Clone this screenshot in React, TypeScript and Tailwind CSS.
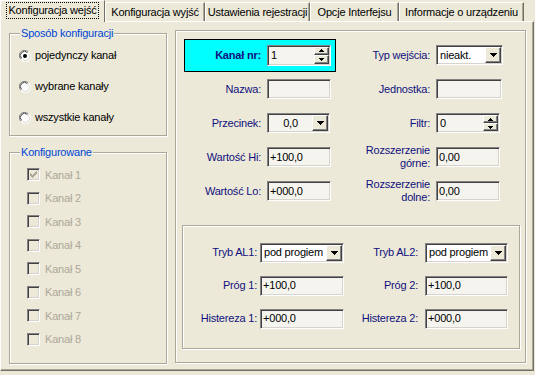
import React from 'react';

const BG = 'bg-[#ece9d8]';

const tabs = [
  { label: 'Konfiguracja wejść', w: 'w-[105px]', active: true },
  { label: 'Konfiguracja wyjść', w: 'w-[100px]' },
  { label: 'Ustawienia rejestracji', w: 'w-[105px]' },
  { label: 'Opcje Interfejsu', w: 'w-[89px]' },
  { label: 'Informacje o urządzeniu', w: 'w-[125px]' }
];

const channels = ['Kanał 1', 'Kanał 2', 'Kanał 3', 'Kanał 4', 'Kanał 5', 'Kanał 6', 'Kanał 7', 'Kanał 8'];

function DownArrow() {
  return (
    <svg width="7" height="4" viewBox="0 0 7 4" shapeRendering="crispEdges">
      <path d="M0 0H7V1H6V2H5V3H4V4H3V3H2V2H1V1H0Z" fill="#000" />
    </svg>
  );
}

function SmallArrow({ up }: { up?: boolean }) {
  return (
    <svg width="5" height="3" viewBox="0 0 5 3" shapeRendering="crispEdges">
      {up ? (
        <path d="M2 0H3V1H4V2H5V3H0V2H1V1H2Z" fill="#000" />
      ) : (
        <path d="M0 0H5V1H4V2H3V3H2V2H1V1H0Z" fill="#000" />
      )}
    </svg>
  );
}

const sunken =
  'border border-t-[#848284] border-l-[#848284] border-r-white border-b-white shadow-[inset_1px_1px_0_#424142,inset_-1px_-1px_0_#d6d3ce]';
const raised =
  'border border-t-white border-l-white border-r-[#424142] border-b-[#424142] shadow-[inset_-1px_-1px_0_#848284]';

function TextBox({ value = '', w }: { value?: string; w: string }) {
  return (
    <div className={`${sunken} ${w} h-[20px] bg-[#f5f4ef] flex items-center pl-[2px] text-black`}>
      {value}
    </div>
  );
}

function Combo({ value, w, center, light }: { value: string; w: string; center?: boolean; light?: boolean }) {
  return (
    <div className={`${sunken} ${w} h-[20px] p-[1px] flex ${light ? 'bg-[#f5f4ef]' : 'bg-white'}`}>
      <div className={`flex-1 min-w-0 flex items-center text-black ${center ? 'justify-center' : 'pl-[2px]'}`}>
        {value}
      </div>
      <div className={`${raised} ${BG} w-[16px] shrink-0 h-full flex items-center justify-center`}>
        <DownArrow />
      </div>
    </div>
  );
}

function Spinner({ value, w, h = 'h-[20px]' }: { value: string; w: string; h?: string }) {
  return (
    <div className={`${sunken} ${w} ${h} p-[1px] flex bg-[#f5f4ef]`}>
      <div className="flex-1 flex items-center pl-[2px] text-black">{value}</div>
      <div className="w-[15px] h-full flex flex-col">
        <div className={`${raised} ${BG} flex-1 flex items-center justify-center`}>
          <SmallArrow up />
        </div>
        <div className={`${raised} ${BG} flex-1 flex items-center justify-center`}>
          <SmallArrow />
        </div>
      </div>
    </div>
  );
}

function Label({ children, w, pr = 'pr-[6px]', bold }: { children: React.ReactNode; w: string; pr?: string; bold?: boolean }) {
  return (
    <div className={`${w} ${pr} shrink-0 text-right leading-[13px] text-[#10107e] ${bold ? 'font-bold' : ''}`}>
      {children}
    </div>
  );
}

function Radio({ checked }: { checked?: boolean }) {
  return (
    <svg width="12" height="12" viewBox="0 0 12 12">
      <circle cx="6" cy="6" r="5.5" fill="#fff" />
      <path d="M1.8 9.2A5 5 0 0 1 9.2 1.8" fill="none" stroke="#848284" strokeWidth="1" />
      <path d="M2.6 8.4A3.9 3.9 0 0 1 8.4 2.6" fill="none" stroke="#424142" strokeWidth="1" />
      <path d="M10.2 2.8A5 5 0 0 1 2.8 10.2" fill="none" stroke="#fff" strokeWidth="1" />
      <path d="M9.4 3.6A3.9 3.9 0 0 1 3.6 9.4" fill="none" stroke="#d6d3ce" strokeWidth="1" />
      {checked && <circle cx="6" cy="6" r="2" fill="#000" />}
    </svg>
  );
}

function Checkbox({ checked }: { checked?: boolean }) {
  return (
    <div className={`${sunken} w-[13px] h-[13px] bg-[#ece9d8] flex items-center justify-center`}>
      {checked && (
        <svg width="7" height="7" viewBox="0 0 7 7" shapeRendering="crispEdges">
          <path d="M6 0H7V3H6V4H5V5H4V6H3V7H2V6H1V5H0V2H1V3H2V4H3V3H4V2H5V1H6Z" fill="#aca899" />
        </svg>
      )}
    </div>
  );
}

function Group({ title, className, children }: { title?: string; className: string; children: React.ReactNode }) {
  return (
    <div className={`relative border border-[#aca899] shadow-[inset_1px_1px_0_#fff,1px_1px_0_#fff] ${className}`}>
      {title && (
        <span className={`absolute -top-[7px] left-[10px] px-[1px] ${BG} leading-[13px] text-[#0046d5]`}>{title}</span>
      )}
      {children}
    </div>
  );
}

export default function App() {
  return (
    <div
      className={`w-[535px] h-[375px] ${BG} text-[11px] tracking-[-0.2px] whitespace-nowrap text-black font-['Liberation_Sans',Arial,sans-serif] overflow-hidden`}
    >
      {/* tabs */}
      <div className="flex items-end h-[21px]">
        {tabs.map((t) =>
          t.active ? (
            <div
              key={t.label}
              className={`${t.w} ${BG} relative z-10 -mb-px h-[22px] border-l border-t border-r border-l-white border-t-white border-r-[#716f64] flex items-start justify-center pt-[1px]`}
            >
              <span className="border border-dotted border-black px-[1px] leading-[15px]">{t.label}</span>
            </div>
          ) : (
            <div
              key={t.label}
              className={`${t.w} h-[19px] border-l border-t border-r border-l-white border-t-white border-r-[#716f64] shadow-[inset_-1px_0_0_#aca899] flex items-center justify-center leading-[13px]`}
            >
              {t.label}
            </div>
          )
        )}
      </div>

      {/* panel */}
      <div className="w-[534px] h-[350px] border border-t-white border-l-white border-r-[#716f64] border-b-[#716f64] shadow-[inset_-1px_-1px_0_#aca899] flex items-start pl-[8px]">
        {/* left column */}
        <div className="w-[158px] mt-[11px] flex flex-col">
          <Group title="Sposób konfiguracji" className="h-[103px] pt-[6px] pl-[9px]">
            {['pojedynczy kanał', 'wybrane kanały', 'wszystkie kanały'].map((r, i) => (
              <div key={r} className="h-[31px] flex items-center gap-[4px]">
                <Radio checked={i === 0} />
                <span>{r}</span>
              </div>
            ))}
          </Group>
          <Group title="Konfigurowane" className="mt-[16px] h-[212px] pt-[10px] pl-[17px]">
            {channels.map((c, i) => (
              <div key={c} className="h-[23.5px] flex items-center gap-[5px] text-[#aca899]">
                <Checkbox checked={i === 0} />
                <span>{c}</span>
              </div>
            ))}
          </Group>
        </div>

        {/* right group */}
        <Group className="ml-[8px] mt-[8px] w-[351px] h-[333px] pt-[7px]">
          <div className="h-[34px] flex items-center">
            <div className="ml-[8px] w-[152px] h-[33px] border border-black bg-[#00ffff] flex items-center">
              <Label w="w-[82px]" bold>
                Kanał nr:
              </Label>
              <Spinner value="1" w="w-[64px]" h="h-[21px]" />
            </div>
            <Label w="w-[100px]">Typ wejścia:</Label>
            <Combo value="nieakt." w="w-[67px]" />
          </div>
          <div className="h-[34px] flex items-center">
            <Label w="w-[91px]">Nazwa:</Label>
            <TextBox w="w-[64px]" />
            <Label w="w-[105px]">Jednostka:</Label>
            <TextBox w="w-[66px]" />
          </div>
          <div className="h-[34px] flex items-center">
            <Label w="w-[91px]">Przecinek:</Label>
            <Combo value="0,0" w="w-[63px]" center light />
            <Label w="w-[106px]">Filtr:</Label>
            <Spinner value="0" w="w-[64px]" />
          </div>
          <div className="h-[34px] flex items-center">
            <Label w="w-[91px]">Wartość Hi:</Label>
            <TextBox value="+100,0" w="w-[64px]" />
            <Label w="w-[105px]">
              Rozszerzenie
              <br />
              górne:
            </Label>
            <TextBox value="0,00" w="w-[64px]" />
          </div>
          <div className="h-[34px] flex items-center">
            <Label w="w-[91px]">Wartość Lo:</Label>
            <TextBox value="+000,0" w="w-[64px]" />
            <Label w="w-[105px]">
              Rozszerzenie
              <br />
              dolne:
            </Label>
            <TextBox value="0,00" w="w-[64px]" />
          </div>

          <Group className="ml-[6px] mt-[17px] w-[338px] h-[124px] pt-[10px]">
            <div className="h-[33px] flex items-center">
              <Label w="w-[77px]" pr="pr-[3px]">
                Tryb AL1:
              </Label>
              <Combo value="pod progiem" w="w-[84px]" />
              <Label w="w-[81px]" pr="pr-[7px]">
                Tryb AL2:
              </Label>
              <Combo value="pod progiem" w="w-[83px]" />
            </div>
            <div className="h-[33px] flex items-center">
              <Label w="w-[77px]" pr="pr-[3px]">
                Próg 1:
              </Label>
              <TextBox value="+100,0" w="w-[84px]" />
              <Label w="w-[81px]" pr="pr-[7px]">
                Próg 2:
              </Label>
              <TextBox value="+100,0" w="w-[83px]" />
            </div>
            <div className="h-[33px] flex items-center">
              <Label w="w-[77px]" pr="pr-[3px]">
                Histereza 1:
              </Label>
              <TextBox value="+000,0" w="w-[84px]" />
              <Label w="w-[81px]" pr="pr-[7px]">
                Histereza 2:
              </Label>
              <TextBox value="+000,0" w="w-[83px]" />
            </div>
          </Group>
        </Group>
      </div>
    </div>
  );
}
